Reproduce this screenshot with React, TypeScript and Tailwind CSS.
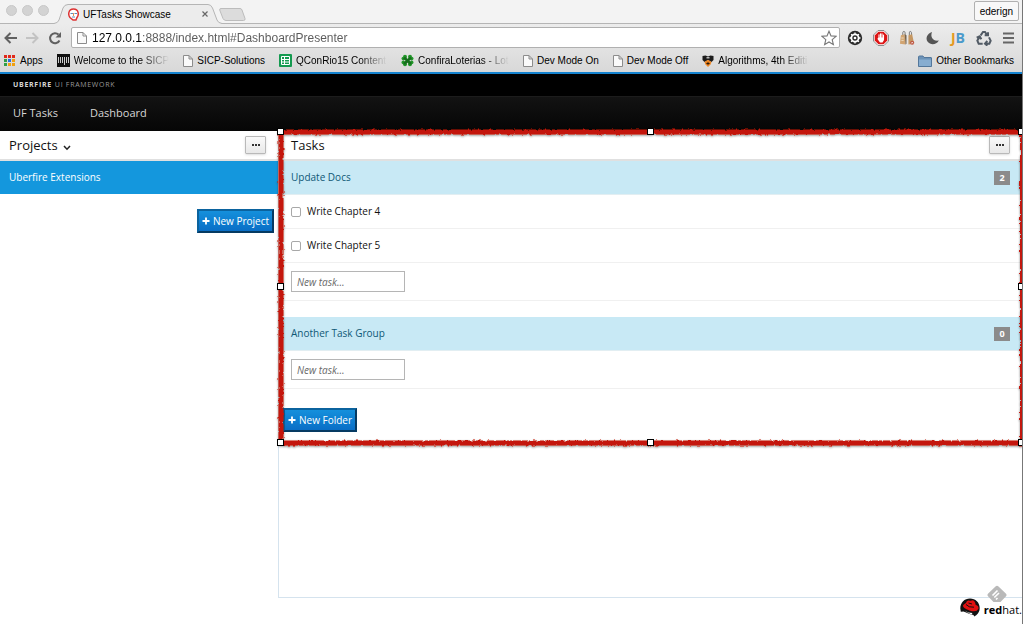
import type { ReactNode } from "react";

function PageIcon() {
  return (
    <svg className="h-3 w-[10px] shrink-0" viewBox="0 0 10 12" fill="#fafafa" stroke="#8c8c8c" aria-hidden="true">
      <path d="M.5.5h5.5l3.5 3.500v7.500h-9zM6 .5v3.500h3.500" />
    </svg>
  );
}

function AppsIcon() {
  const colors = ["#e0291b", "#e0291b", "#e0291b", "#2f9e47", "#2b6de0", "#f0a010", "#2f9e47", "#f0a010", "#f0a010"];
  return (
    <svg className="size-3 shrink-0" viewBox="0 0 12 12" aria-hidden="true">
      {colors.map((c, i) => (
        <rect key={i} x={(i % 3) * 4} y={Math.floor(i / 3) * 4} width="3" height="3" fill={c} />
      ))}
    </svg>
  );
}

function PressIcon() {
  return (
    <svg className="size-[13px] shrink-0" viewBox="0 0 13 13" aria-hidden="true">
      <rect width="13" height="13" fill="#111" />
      <path d="M1.500 3v6M3.500 3v6M5.500 3v6M7.500 3v8M9.500 3v6M11.500 3v6" stroke="#ccc" strokeWidth="1" />
    </svg>
  );
}

function SheetIcon() {
  return (
    <svg className="size-[13px] shrink-0" viewBox="0 0 13 13" aria-hidden="true">
      <rect width="13" height="13" rx="1" fill="#159a50" />
      <path d="M2.500 2.500h8v8h-8zM2.500 5.500h8M2.500 8h8M5.500 2.500v8" stroke="#fff" fill="none" />
    </svg>
  );
}

function CloverIcon() {
  return (
    <svg className="size-[13px] shrink-0" viewBox="0 0 13 13" aria-hidden="true">
      <g fill="#22962a">
        <circle cx="4" cy="2.800" r="2" /><circle cx="9" cy="2.800" r="2" />
        <circle cx="2.300" cy="4.600" r="1.800" /><circle cx="10.700" cy="4.600" r="1.800" />
        <circle cx="2.300" cy="8.400" r="1.800" /><circle cx="10.700" cy="8.400" r="1.800" />
        <circle cx="4" cy="10.300" r="2" /><circle cx="9" cy="10.300" r="2" />
        <path d="M3 3.500l7 6.500M10 3.500l-7 6.500" stroke="#166f1c" strokeWidth="2.800" />
      </g>
    </svg>
  );
}

function ShieldIcon() {
  return (
    <svg className="size-3 shrink-0" viewBox="0 0 12 12" aria-hidden="true">
      <path d="M.5 1l3-.5L6 1.500 8.500.5l3 .5v4L9.500 7 6 5 2.500 7 .5 5z" fill="#1b1b1b" />
      <path d="M2.500 7L6 4.800 9.500 7 8.500 9.500 6 12 3.500 9.500z" fill="#ee8522" />
      <path d="M4 8.500l2-1.300 2 1.300-2 1.300z" fill="#2b1b0b" />
      <path d="M4.500 2h3v1.500h-3z" fill="#b9b9b9" />
    </svg>
  );
}

function FolderIcon() {
  return (
    <svg className="h-3 w-[14px] shrink-0" viewBox="0 0 14 12" aria-hidden="true">
      <path d="M.5 2q0-1 1-1h3.500l1 1.500h7q.5 0 .5.500v8.500H.5z" fill="#6c93b8" stroke="#53779b" />
      <path d="M1 4.500h12v6.500H1z" fill="#87add0" />
    </svg>
  );
}

function Bookmark({ icon, label, fade = false }: { icon: ReactNode; label: string; fade?: boolean }) {
  return (
    <a href="#bookmark" className="flex shrink-0 items-center gap-1">
      {icon}
      {fade ? (
        <span className="min-w-[91px] whitespace-nowrap [mask-image:linear-gradient(to_right,black_70%,transparent)]">
          {label}
        </span>
      ) : (
        <span className="whitespace-nowrap">{label}</span>
      )}
    </a>
  );
}

function Extensions() {
  return (
    <div className="flex shrink-0 items-center gap-[10px]">
      <button aria-label="Settings extension">
        <svg className="size-4" viewBox="0 0 16 16">
          <circle cx="8" cy="8" r="7.200" fill="#2b2b2b" />
          <circle cx="8" cy="8" r="3.600" fill="none" stroke="#fff" strokeWidth="1.800" />
          <circle cx="8" cy="8" r="1.300" fill="#fff" />
          <path d="M8 2.500v2M8 11.500v2M2.500 8h2M11.500 8h2M4.100 4.100l1.300 1.300M10.600 10.600l1.300 1.300M11.900 4.100l-1.300 1.300M5.400 10.600l-1.300 1.300" stroke="#fff" strokeWidth="1.300" />
        </svg>
      </button>
      <button aria-label="Ad blocker">
        <svg className="size-4" viewBox="0 0 16 16">
          <path d="M5 .5h6L15.500 5v6L11 15.500H5L.5 11V5z" fill="#fff" stroke="#8c8c8c" />
          <path d="M5.400 1.700h5.200l3.700 3.700v5.200l-3.700 3.700H5.400l-3.700-3.700V5.400z" fill="#dc1616" />
          <path d="M6 9V4.800M7.500 8V3.800M9 8V3.800M10.500 9V5" stroke="#fff" strokeWidth="1.100" strokeLinecap="round" />
          <path d="M5.500 7.500h5.500V10l-1.500 2.500h-2.500L4.300 8.800l.7-.6z" fill="#fff" />
        </svg>
      </button>
      <button aria-label="Tag extension">
        <svg className="size-4" viewBox="0 0 17 16">
          <path d="M4 5V2.500Q4 1 5.200 1T6.500 2.500V5M11 5V2.500Q11 1 12 1t1.300 1.500V5" fill="none" stroke="#777" />
          <path d="M2 5l4-1 1 11-6-1z" fill="#d1a471" /><path d="M6 4l2 1v9l-1 1z" fill="#76644f" />
          <path d="M10 5l4-1 2 10-6 1z" fill="#c59762" /><path d="M2.500 8h2.500M2.500 10.500h2.500" stroke="#efdfc8" />
          <circle cx="14" cy="13" r="2.200" fill="#bd5542" /><path d="M13.200 12.200l1.600 1.600M14.800 12.200l-1.600 1.600" stroke="#fff" strokeWidth=".7" />
        </svg>
      </button>
      <button aria-label="Night mode">
        <svg className="h-4 w-[15px]" viewBox="0 0 15 16">
          <path d="M7 2C5 7 8 11.500 13.800 10.500 11.500 15 5.500 15.500 2.700 11.800.2 8.500 2 3.500 7 2z" fill="#555" />
        </svg>
      </button>
      <button aria-label="JB" className="h-4 w-4 font-['Open_Sans',sans-serif] text-[14px] leading-4 font-bold">
        <span className="text-[#e49a22]">J</span><span className="text-[#4b9acb]">B</span>
      </button>
      <button aria-label="Recycle">
        <svg className="size-4" viewBox="0 0 24 24" fill="none" stroke="#525b65" strokeWidth="3">
          <path d="M7 8l3.500-5h3L17 8M13 8h5V3.500" />
          <path d="M19.500 11L22 16l-2 4.500H14M17 16.500l-3.500 4 3.500 3" />
          <path d="M10 20.500H4L2 16l3.500-6M1 11.500L5.500 9.500 8 14" />
        </svg>
      </button>
      <button aria-label="Menu">
        <svg className="h-4 w-3" viewBox="0 0 12 16">
          <path d="M1 3.500h11M1 8h11M1 12.500h11" stroke="#666" strokeWidth="2.200" />
        </svg>
      </button>
    </div>
  );
}

function BrowserChrome() {
  return (
    <header className="font-['Liberation_Sans',Arial,sans-serif] text-black">
      <div className="flex h-6 items-start bg-[#f3f3f3] shadow-[inset_0_-1px_0_#b5b5b5]">
        <div className="flex gap-1 pt-[5px] pr-1 pl-[6px]">
          {["Close", "Minimise", "Zoom"].map((name) => (
            <button key={name} aria-label={name} className="mr-px size-[11px] rounded-full border border-[#c8c8c8] bg-[#d3d3d3]" />
          ))}
        </div>
        <div className="relative mt-1 flex h-5 w-[168px] items-center pr-[14px] pl-[14px]">
          <svg className="absolute inset-0 size-full" viewBox="0 0 168 20" preserveAspectRatio="none" aria-hidden="true">
            <path d="M0 19.500Q4 19 5 16L9 4Q10.500.5 14 .5H154Q157 .5 158.500 4L163 16Q164 19 168 19.500V20H0z" fill="#ececec" />
            <path d="M0 19.500Q4 19 5 16L9 4Q10.500.5 14 .5H154Q157 .5 158.500 4L163 16Q164 19 168 19.500" fill="none" stroke="#b5b5b5" />
          </svg>
          <svg className="relative h-[13px] w-[11px]" viewBox="0 0 11 13" aria-hidden="true">
            <path d="M2 9.500C0 7 0 1 5.500 1S11 7 9 9.500L8 12H5z" fill="#fff" stroke="#dd3333" strokeWidth="1.500" />
            <path d="M2.500 5.500h2.500M6.500 5.500H9M4 9h3" stroke="#5a8bc0" />
            <path d="M5.500 5v3" stroke="#e79055" />
          </svg>
          <span className="relative ml-1 flex-1 whitespace-nowrap text-[10px]">UFTasks Showcase</span>
          <button aria-label="Close tab" className="relative">
            <svg className="size-[6px]" viewBox="0 0 6 6"><path d="M.5.5l5 5M5.500.5l-5 5" stroke="#666" strokeWidth="1.200" /></svg>
          </button>
        </div>
        <button aria-label="New tab" className="mt-2 -ml-[3px]">
          <svg className="h-[13px] w-[27px]" viewBox="0 0 27 13">
            <path d="M2 .5H21Q22.500.5 23 2L26 10.500Q26.500 12.500 24.500 12.500H7Q5 12.500 4 10.500L.7 2Q.5.5 2 .5z" fill="#dcdcdc" stroke="#bcbcbc" />
          </svg>
        </button>
        <button className="mt-px mr-[3px] ml-auto h-5 rounded-[2px] border border-[#b0b0b0] bg-[#f8f8f8] px-[5px] text-[10px]">ederign</button>
      </div>
      <div className="bg-linear-to-b from-[#ececec] to-[#d8d8d8]">
        <div className="flex h-[27px] items-center pr-2 pl-1">
          <div className="flex w-[67px] shrink-0 items-center gap-[9px]">
            <button aria-label="Back">
              <svg className="h-3 w-[13px]" viewBox="0 0 13 12"><path d="M6.500 1l-5 5 5 5M2 6h11" fill="none" stroke="#606060" strokeWidth="2" /></svg>
            </button>
            <button aria-label="Forward">
              <svg className="h-3 w-[13px]" viewBox="0 0 13 12"><path d="M6.500 1l5 5-5 5M11 6H0" fill="none" stroke="#c3c3c3" strokeWidth="2" /></svg>
            </button>
            <button aria-label="Reload">
              <svg className="size-[14px]" viewBox="0 0 14 14">
                <path d="M11.500 9.500A5 5 0 1 1 10.500 3.500" fill="none" stroke="#606060" strokeWidth="2" />
                <path d="M13 1v5.500H7.500z" fill="#606060" />
              </svg>
            </button>
          </div>
          <div className="flex h-[21px] min-w-0 flex-1 items-center rounded-[2px] border border-[#b0b0b0] bg-white pr-[2px] pl-[5px]">
            <PageIcon />
            <input
              id="address"
              aria-label="Address"
              className="ml-[5px] h-4 min-w-0 flex-1 bg-[linear-gradient(to_right,black_50px,#5a5a5a_50px)] bg-clip-text text-[12px] leading-4 text-transparent outline-none"
              defaultValue="127.0.0.1:8888/index.html#DashboardPresenter"
            />
            <button aria-label="Bookmark this page">
              <svg className="size-4" viewBox="0 0 16 16"><path d="M8 1.200l2 4.700 5 .4-3.800 3.300 1.200 5L8 12l-4.400 2.600 1.200-5L1 6.300l5-.4z" fill="#fff" stroke="#777" strokeWidth="1.100" /></svg>
            </button>
          </div>
          <div className="ml-[7px]"><Extensions /></div>
        </div>
        <nav aria-label="Bookmarks" className="flex h-[21px] items-center gap-[14px] pr-2 pb-[2px] pl-1 text-[10px]">
          <Bookmark icon={<AppsIcon />} label="Apps" />
          <Bookmark icon={<PressIcon />} label="Welcome to the SICP" fade />
          <Bookmark icon={<PageIcon />} label="SICP-Solutions" />
          <Bookmark icon={<SheetIcon />} label="QConRio15 Content" fade />
          <Bookmark icon={<CloverIcon />} label="ConfiraLoterias - Lot" fade />
          <Bookmark icon={<PageIcon />} label="Dev Mode On" />
          <Bookmark icon={<PageIcon />} label="Dev Mode Off" />
          <Bookmark icon={<ShieldIcon />} label="Algorithms, 4th Editi" fade />
          <div className="ml-auto"><Bookmark icon={<FolderIcon />} label="Other Bookmarks" /></div>
        </nav>
      </div>
    </header>
  );
}

function MoreButton({ label }: { label: string }) {
  return (
    <button aria-label={label} className="flex h-[18px] w-[21px] items-center justify-center gap-px rounded-[1px] border border-[#b9b9b9] bg-linear-to-b from-[#fafafa] to-[#e8e8e8] shadow-sm">
      <span className="size-[2px] bg-[#333]" /><span className="size-[2px] bg-[#333]" /><span className="size-[2px] bg-[#333]" />
    </button>
  );
}

function PrimaryButton({ children }: { children: ReactNode }) {
  return (
    <button className="flex h-6 items-center gap-[3px] border-2 border-t-[#0b639e] border-r-[#063a62] border-b-[#063a62] border-l-[#0b639e] bg-linear-to-b from-[#1590dc] to-[#0a6ec6] px-[3px] text-[10px] whitespace-nowrap text-white">
      <svg className="size-2" viewBox="0 0 8 8" aria-hidden="true"><path d="M4 .5v7M.5 4h7" stroke="#fff" strokeWidth="1.800" /></svg>
      {children}
    </button>
  );
}

function TaskGroup({ id, title, tasks }: { id: string; title: string; tasks: string[] }) {
  return (
    <section className="mb-4">
      <div className="flex h-[34px] items-center justify-between border-b border-[#e2eef2] bg-[#c8e9f5] px-3">
        <h3 className="text-[10px] text-[#0f5876]">{title}</h3>
        <span className="flex h-[14px] w-4 items-center justify-center bg-[#8b8b8b] text-[9px] font-bold text-white">{tasks.length}</span>
      </div>
      <ul>
        {tasks.map((task) => (
          <li key={task} className="h-[34px] border-b border-[#f0f0f0] px-3">
            <label className="flex h-full items-center gap-[6px] text-[10px] text-[#111]">
              <input type="checkbox" className="size-[10px] appearance-none rounded-[2px] border border-[#a8a8a8] bg-white checked:bg-[#1590dc]" />
              {task}
            </label>
          </li>
        ))}
      </ul>
      <div className="flex h-[38px] items-center border-b border-[#f0f0f0] px-3">
        <input id={id} aria-label={`New task in ${title}`} placeholder="New task..." className="h-[21px] w-[114px] border border-[#b5b5b5] bg-white px-[5px] text-[10px] italic placeholder:text-[#6a6a6a]" />
      </div>
    </section>
  );
}

function SelectionFrame() {
  const handle = "absolute size-[7px] border border-black bg-white";
  return (
    <div className="pointer-events-none absolute inset-0">
      <svg className="absolute inset-0 size-full overflow-visible" aria-hidden="true">
        <defs>
          <filter id="rough" x="-2%" y="-4%" width="104%" height="108%">
            <feTurbulence type="fractalNoise" baseFrequency="0.35" numOctaves="2" seed="4" result="noise" />
            <feDisplacementMap in="SourceGraphic" in2="noise" scale="3" xChannelSelector="R" yChannelSelector="G" result="edge" />
            <feDropShadow in="edge" dx="0" dy="1" stdDeviation="1" floodColor="#000" floodOpacity="0.45" />
          </filter>
        </defs>
        <rect x="2" y="1" width="99.800%" height="100%" fill="none" stroke="#c4150c" strokeWidth="5" filter="url(#rough)" />
      </svg>
      <span className={`${handle} -top-[3px] -left-[2px]`} />
      <span className={`${handle} -top-[3px] left-1/2 -ml-1`} />
      <span className={`${handle} -top-[3px] -right-[3px]`} />
      <span className={`${handle} top-1/2 -left-[2px] -mt-1`} />
      <span className={`${handle} top-1/2 -right-[3px] -mt-1`} />
      <span className={`${handle} -bottom-1 -left-[2px]`} />
      <span className={`${handle} -bottom-1 left-1/2 -ml-1`} />
      <span className={`${handle} -right-[3px] -bottom-1`} />
    </div>
  );
}

export default function App() {
  return (
    <div className="flex min-h-screen flex-col overflow-hidden border-r border-[#777] bg-white font-['Open_Sans',sans-serif]">
      <BrowserChrome />
      <div className="border-t-2 border-[#1583cf] bg-black text-[#d6d6d6]">
        <p className="flex h-[22px] items-center gap-[3px] pl-[13px] text-[7px] tracking-widest">
          <b>UBERFIRE</b><span className="text-[#999]">UI FRAMEWORK</span>
        </p>
        <nav aria-label="Main" className="flex h-[35px] items-center gap-8 border-t border-[#1c1c1c] bg-linear-to-b from-[#131313] to-[#060606] pb-[2px] pl-[13px] text-[11px]">
          <a href="#tasks">UF Tasks</a>
          <a href="#dashboard">Dashboard</a>
        </nav>
      </div>
      <main className="flex flex-1">
        <aside className="w-[278px] shrink-0">
          <div className="flex h-[30px] items-center justify-between border-b-2 border-[#e0e0e0] pr-3 pl-[9px]">
            <button className="flex items-center gap-[5px] pt-[2px] text-[13px] text-[#111]">
              Projects
              <svg className="mt-1 h-[6px] w-2" viewBox="0 0 8 6" aria-hidden="true"><path d="M1 1l3 3.200L7 1" fill="none" stroke="#222" strokeWidth="1.500" /></svg>
            </button>
            <MoreButton label="Project options" />
          </div>
          <a href="#uberfire-extensions" className="flex h-[33px] items-center bg-[#1497dd] pl-[9px] text-[10px] text-white">Uberfire Extensions</a>
          <div className="flex justify-end pt-[15px] pr-1">
            <PrimaryButton>New Project</PrimaryButton>
          </div>
        </aside>
        <div className="min-w-0 flex-1 border-b border-l border-[#d5e3ee]">
          <div className="relative pb-[10px]">
            <div className="flex h-[30px] items-center justify-between border-b-2 border-[#e0e0e0] px-3">
              <h2 className="pt-[2px] text-[13px] text-[#111]">Tasks</h2>
              <MoreButton label="Task options" />
            </div>
            <TaskGroup id="task-docs" title="Update Docs" tasks={["Write Chapter 4", "Write Chapter 5"]} />
            <TaskGroup id="task-other" title="Another Task Group" tasks={[]} />
            <div className="pt-[3px] pl-1">
              <PrimaryButton>New Folder</PrimaryButton>
            </div>
            <SelectionFrame />
          </div>
        </div>
      </main>
      <footer className="relative flex h-[26px] items-start justify-end">
        <svg className="absolute -top-[13px] right-[15px] size-5" viewBox="0 0 20 20" aria-hidden="true">
          <path d="M8.500 1.500Q10 .2 11.500 1.500l7.300 7q1.500 1.500 0 3L13.500 17h-7L1.200 11.500q-1.500-1.500 0-3z" fill="#b9b9b9" />
          <path d="M5.500 10.500L10.500 5.500M7.300 12.500L12 8M9 14.500l1.500-1.500" stroke="#fff" strokeWidth="1.600" />
        </svg>
        <a href="#redhat" className="flex items-start gap-1 text-black">
          <svg className="h-[19px] w-5" viewBox="0 0 20 19" aria-hidden="true">
            <path d="M.3 10.500C.3 4.500 4.500.5 10 .5s9.700 4 9.700 9.500c0 3-1.200 5.500-3.500 7.200l-2 1.300-.7-1.500C9 16.500 6 14 3.500 13.500L.8 13.800z" fill="#111" />
            <path d="M6 5q.5-3 3-2.500 1.500.7 3-.2 3-.3 3.600 4.500 3.400 1.200 2.900 4-2 4-9 1.700Q2.500 10 3 7.500 3.500 6 6 5z" fill="#e01010" />
            <path d="M6 6.500q2.500 3.200 8 2.700M8.500 5l3.500 1" fill="none" stroke="#111" strokeWidth="1" />
            <path d="M4.500 12.500q4 2.500 8 2.500l-1 1.500Q8 15 4.500 12.500z" fill="#fff" />
          </svg>
          <span className="text-[11px] leading-6"><b>red</b>hat.</span>
        </a>
      </footer>
    </div>
  );
}
